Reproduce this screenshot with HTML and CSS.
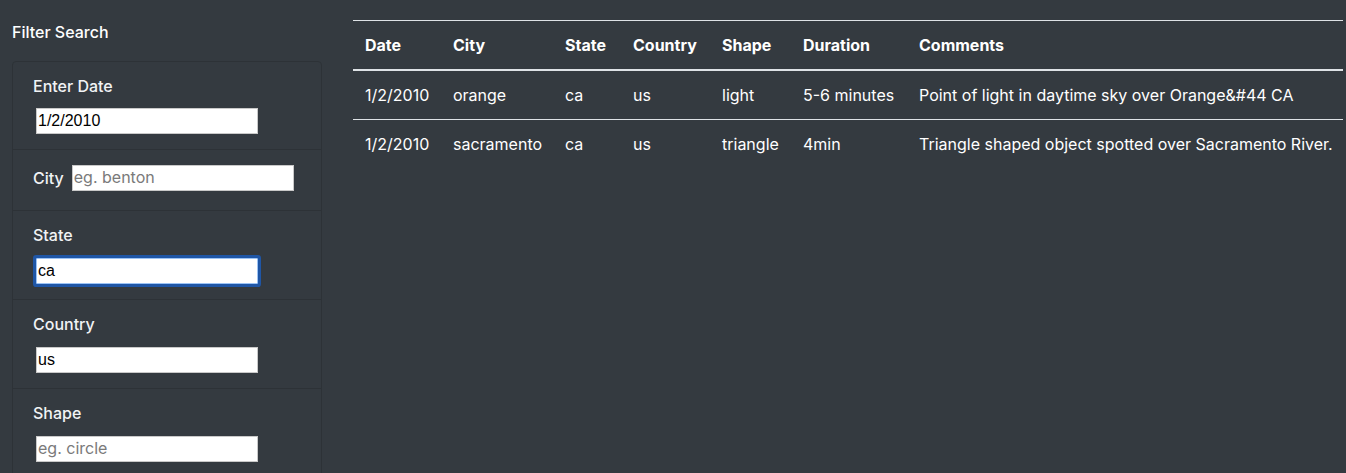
FILE: index.html
```html
<!DOCTYPE html>
<html lang="en">
<head>
<meta charset="utf-8">
<title>UFO Sightings</title>
<link rel="stylesheet" href="styles.css">
</head>
<body>
<div class="page">
  <aside class="sidebar">
    <h6 class="filter-title">Filter Search</h6>
    <ul class="filters">
      <li class="filter-item">
        <label class="filter-label" for="date">Enter Date</label>
        <input class="filter-input" id="date" type="text" value="1/2/2010">
      </li>
      <li class="filter-item inline">
        <label class="filter-label" for="city">City</label>
        <input class="filter-input" id="city" type="text" placeholder="eg. benton">
      </li>
      <li class="filter-item">
        <label class="filter-label" for="state">State</label>
        <input class="filter-input focused" id="state" type="text" value="ca">
      </li>
      <li class="filter-item">
        <label class="filter-label" for="country">Country</label>
        <input class="filter-input" id="country" type="text" value="us">
      </li>
      <li class="filter-item">
        <label class="filter-label" for="shape">Shape</label>
        <input class="filter-input" id="shape" type="text" placeholder="eg. circle">
      </li>
    </ul>
  </aside>
  <main class="results">
    <table class="ufo-table">
      <colgroup>
        <col class="c-date"><col class="c-city"><col class="c-state"><col class="c-country"><col class="c-shape"><col class="c-duration"><col class="c-comments">
      </colgroup>
      <thead>
        <tr><th>Date</th><th>City</th><th>State</th><th>Country</th><th>Shape</th><th>Duration</th><th>Comments</th></tr>
      </thead>
      <tbody>
        <tr><td>1/2/2010</td><td>orange</td><td>ca</td><td>us</td><td>light</td><td>5-6 minutes</td><td>Point of light in daytime sky over Orange&amp;#44 CA</td></tr>
        <tr><td>1/2/2010</td><td>sacramento</td><td>ca</td><td>us</td><td>triangle</td><td>4min</td><td>Triangle shaped object spotted over Sacramento River.</td></tr>
      </tbody>
    </table>
  </main>
</div>
</body>
</html>
```

FILE: styles.css
```css
html, body {
  margin: 0;
  padding: 0;
  background: #343a40;
  color: #fff;
  font-family: Inter, "Liberation Sans", sans-serif;
  font-size: 16px;
  line-height: 24px;
}

.page {
  display: flex;
  align-items: flex-start;
}

.sidebar {
  width: 310px;
  padding: 20px 0 0 12px;
  flex: none;
}

.filter-title {
  margin: 0 0 17px 0;
  font-size: 16px;
  font-weight: 500;
  line-height: 24px;
  color: #fff;
}

.filters {
  list-style: none;
  margin: 0;
  padding: 0;
  border: 1px solid #2d3237;
  border-radius: 4px;
}

.filter-item {
  padding: 12px 20px 15px 20px;
  border-top: 1px solid #2d3237;
}

.filter-item:first-child {
  border-top: none;
}

.filter-label {
  display: block;
  margin-bottom: 11px;
  font-weight: 500;
  color: #f1f3f5;
}

.filter-item:first-child .filter-label {
  margin-bottom: 10px;
}

.filter-item.inline {
  display: flex;
  align-items: center;
  padding: 15px 20px 19px 20px;
}

.filter-item.inline .filter-label {
  margin: 0 8px 0 0;
}

.filter-input {
  display: block;
  box-sizing: border-box;
  width: 222px;
  height: 26px;
  margin: 0 0 0 3px;
  padding: 0 1px;
  border: 1px solid #c9c9c9;
  border-radius: 0;
  background: #fff;
  color: #000;
  font-family: "Liberation Sans", Arial, sans-serif;
  font-size: 16px;
  outline: none;
}

.filter-item.inline .filter-input {
  margin: 0;
}

.filter-input::placeholder {
  color: #7a7a7a;
  font-family: Inter, "Liberation Sans", sans-serif;
}

.filter-input.focused {
  border: 1px solid #9cc3f5;
  border-radius: 1px;
  box-shadow: 0 0 0 3px #1f56a6;
}

.results {
  flex: none;
  width: 990px;
  margin-left: 31px;
  padding-top: 20px;
}

.ufo-table {
  width: 990px;
  table-layout: fixed;
  border-collapse: collapse;
  color: #fff;
}

.c-date { width: 88px; }
.c-city { width: 112px; }
.c-state { width: 68px; }
.c-country { width: 89px; }
.c-shape { width: 81px; }
.c-duration { width: 116px; }
.c-comments { width: 436px; }

.ufo-table th,
.ufo-table td {
  padding: 12px;
  text-align: left;
  vertical-align: top;
  border-top: 1px solid #dee2e6;
  white-space: nowrap;
  overflow: hidden;
}

.ufo-table th {
  font-weight: 700;
  border-bottom: 2px solid #dee2e6;
}
```
